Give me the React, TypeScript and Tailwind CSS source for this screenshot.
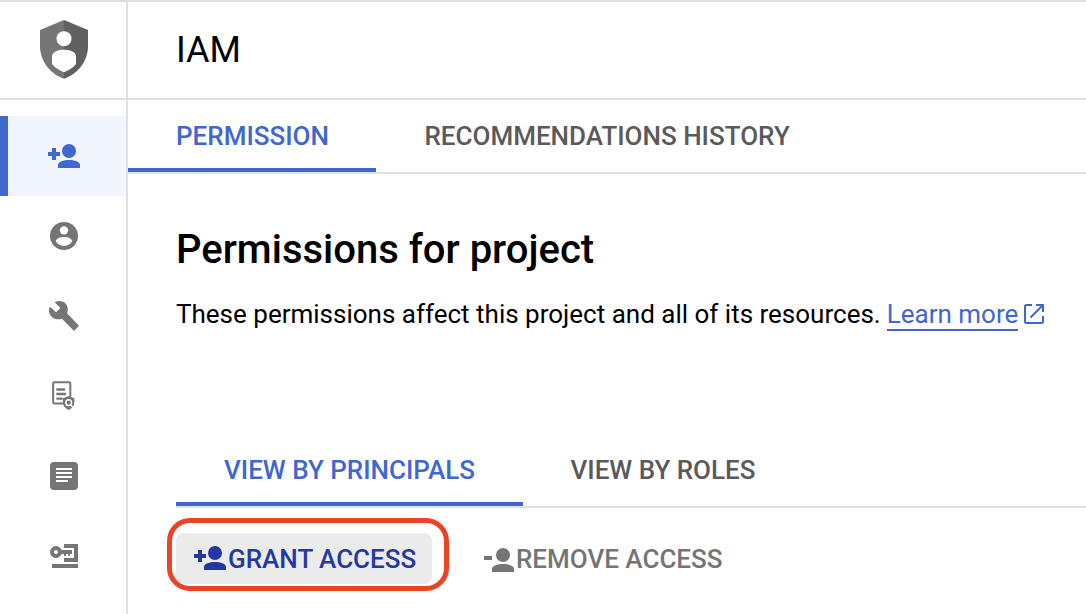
import type { ReactNode } from "react";

function Icon({ children, className = "" }: { children: ReactNode; className?: string }) {
  return (
    <svg viewBox="0 0 120 120" fill="currentColor" className={"size-10 shrink-0 " + className} aria-hidden="true">
      {children}
    </svg>
  );
}

const PersonShape = () => (
  <>
    <circle cx="75" cy="45" r="21" />
    <path d="M42 96V86C43 77 59 72 75 72S107 77 108 86V96Z" />
  </>
);

const PersonAdd = () => (
  <Icon>
    <PersonShape />
    <path d="M24 36H36V48H48V60H36V72H24V60H12V48H24Z" />
  </Icon>
);

const PersonRemove = () => (
  <Icon>
    <PersonShape />
    <path d="M18 48H42V60H18Z" />
  </Icon>
);

const Account = () => (
  <Icon>
    <circle cx="60" cy="60" r="42" />
    <circle cx="60" cy="43" r="12.5" fill="#fff" />
    <path d="M35 76C37 67 48 63 60 63S83 67 85 76C79 85 70 90 60 90S41 85 35 76Z" fill="#fff" />
  </Icon>
);

const Wrench = () => (
  <Icon>
    <path d="M18 32L36 49L49 36L32 19C42 13 55 14 64 22C71 29 74 42 69 52L105 89L90 105L54 68C43 72 31 70 23 62C15 54 13 42 18 32Z" />
  </Icon>
);

const Policy = () => (
  <Icon>
    <path d="M79 62V22Q79 18.500 75 18.500H31Q27.500 18.500 27.500 22V78Q27.500 82.500 31 82.500H60" fill="none" stroke="currentColor" strokeWidth="6" />
    <path d="M37 37H63V44H37ZM37 50.500H66V57.500H37ZM37 64.500H56V71.500H37Z" />
    <path d="M74 60L91 67V79C91 90 84 98 74 102C64 98 57 90 57 79V67Z" />
    <circle cx="74" cy="80" r="8.500" fill="none" stroke="#fff" strokeWidth="4.500" />
    <path d="M79 86L86 93" stroke="#fff" strokeWidth="3.500" />
  </Icon>
);

const Article = () => (
  <Icon>
    <rect x="18" y="18" width="84" height="84" rx="12" />
    <path d="M36 36H84V42H36ZM36 48H84V54H36ZM36 60H84V66H36ZM36 72H72V78H36Z" fill="#fff" />
  </Icon>
);

const KeyBox = () => (
  <Icon>
    <path fillRule="evenodd" d="M53 42H84V54H78V60H73V54H66V60H60V54H53A18 18 0 1 1 53 42ZM36 42A6 6 0 1 0 36 54A6 6 0 1 0 36 42Z" />
    <path d="M60 24H102V78H60V66H90V36H60ZM24 84H102V96H24Z" />
  </Icon>
);

const Shield = () => (
  <svg viewBox="0 0 144 177" className="h-[59px] w-12" aria-hidden="true">
    <path d="M72 0L0 30V78C0 122 30 163 72 176Z" fill="#757575" />
    <path d="M72 0L144 30V78C144 122 114 163 72 176Z" fill="#616161" />
    <circle cx="72" cy="56" r="22.500" fill="#fff" />
    <path d="M36 108C37 94 56 89 72 89S107 94 108 108V132C101 142 88 150 72 157C56 150 43 142 36 132Z" fill="#fff" />
  </svg>
);

const External = () => (
  <svg viewBox="0 0 20 20" className="mt-[5px] ml-[6px] size-5" fill="none" stroke="currentColor" strokeWidth="2" aria-hidden="true">
    <path d="M8 1H2.500Q1 1 1 2.500V17.500Q1 19 2.500 19H17.500Q19 19 19 17.500V12M12 1H19V8M19 1L6.500 13.500" />
  </svg>
);

const items = [
  { id: "accounts", icon: <Account /> },
  { id: "tools", icon: <Wrench /> },
  { id: "policies", icon: <Policy /> },
  { id: "articles", icon: <Article /> },
  { id: "keys", icon: <KeyBox /> },
];

export default function App() {
  return (
    <div className="flex h-[614px] w-[1086px] overflow-hidden border-t-2 border-[#dddde2] bg-white font-['Roboto',sans-serif] text-black">
      <aside className="flex w-32 shrink-0 flex-col border-r-2 border-[#e0e0e0]">
        <div className="flex h-[98px] shrink-0 justify-center border-b-2 border-[#e0e0e0] pt-[18px] pl-[2px]">
          <Shield />
        </div>
        <nav className="mt-4 flex flex-col text-[#757575]">
          <div className="flex h-20 items-center border-l-8 border-[#4067d0] bg-[#f0f5fe] pl-9 text-[#4067d0]">
            <PersonAdd />
          </div>
          {items.map((item) => (
            <div key={item.id} className="flex h-20 items-center pl-11">{item.icon}</div>
          ))}
        </nav>
      </aside>
      <main className="flex min-w-0 flex-1 flex-col whitespace-nowrap">
        <header className="flex h-[98px] shrink-0 items-center border-b-2 border-[#e0e0e0] pl-12">
          <h1 className="text-[36px] leading-[42px]">IAM</h1>
        </header>
        <div className="flex h-[74px] shrink-0 border-b-2 border-[#e0e0e0] text-[26px] leading-[72px] font-medium">
          <div className="w-[248px] border-b-4 border-[#4067d0] pl-12 text-[#4067d0]">PERMISSION</div>
          <div className="pl-[48.5px] text-[#5a5a5a]">RECOMMENDATIONS HISTORY</div>
        </div>
        <section className="flex flex-col pl-12">
          <h2 className="mt-[52px] text-[40px] leading-[48px] font-medium">Permissions for project</h2>
          <div className="mt-[25px] flex h-[32px] text-[26px] leading-[30px]">
            <span>These permissions affect this project and all of its resources.</span>
            <a className="ml-[6px] flex items-start text-[#4067d0]">
              <span className="h-8 border-b-2 border-[#4067d0]">Learn more</span>
              <External />
            </a>
          </div>
          <div className="mt-[103px] flex h-[74px] border-b-2 border-[#e0e0e0] text-[26px] leading-[72px] font-medium">
            <div className="w-[347px] border-b-4 border-[#4067d0] pl-12 text-[#4067d0]">VIEW BY PRINCIPALS</div>
            <div className="pl-[47.5px] text-[#5a5a5a]">VIEW BY ROLES</div>
          </div>
          <div className="mt-[10px] -ml-[9px] flex text-[26px] font-medium">
            <div className="h-[73px] w-[282px] rounded-[23px] border-[5px] border-[#ec4225] pt-[10px] pl-1">
              <button className="flex h-[51px] w-64 items-start rounded-lg bg-[#ebebeb] pt-[5px] pl-[14px] text-[#2338a3]">
                <PersonAdd />
                <span className="mt-px -ml-[2px] leading-10">GRANT ACCESS</span>
              </button>
            </div>
            <button className="mt-[15px] ml-[29px] flex h-[51px] items-start pt-[7px] text-[#757575]">
              <PersonRemove />
              <span className="-mt-px -ml-[2px] leading-10">REMOVE ACCESS</span>
            </button>
          </div>
        </section>
      </main>
    </div>
  );
}
